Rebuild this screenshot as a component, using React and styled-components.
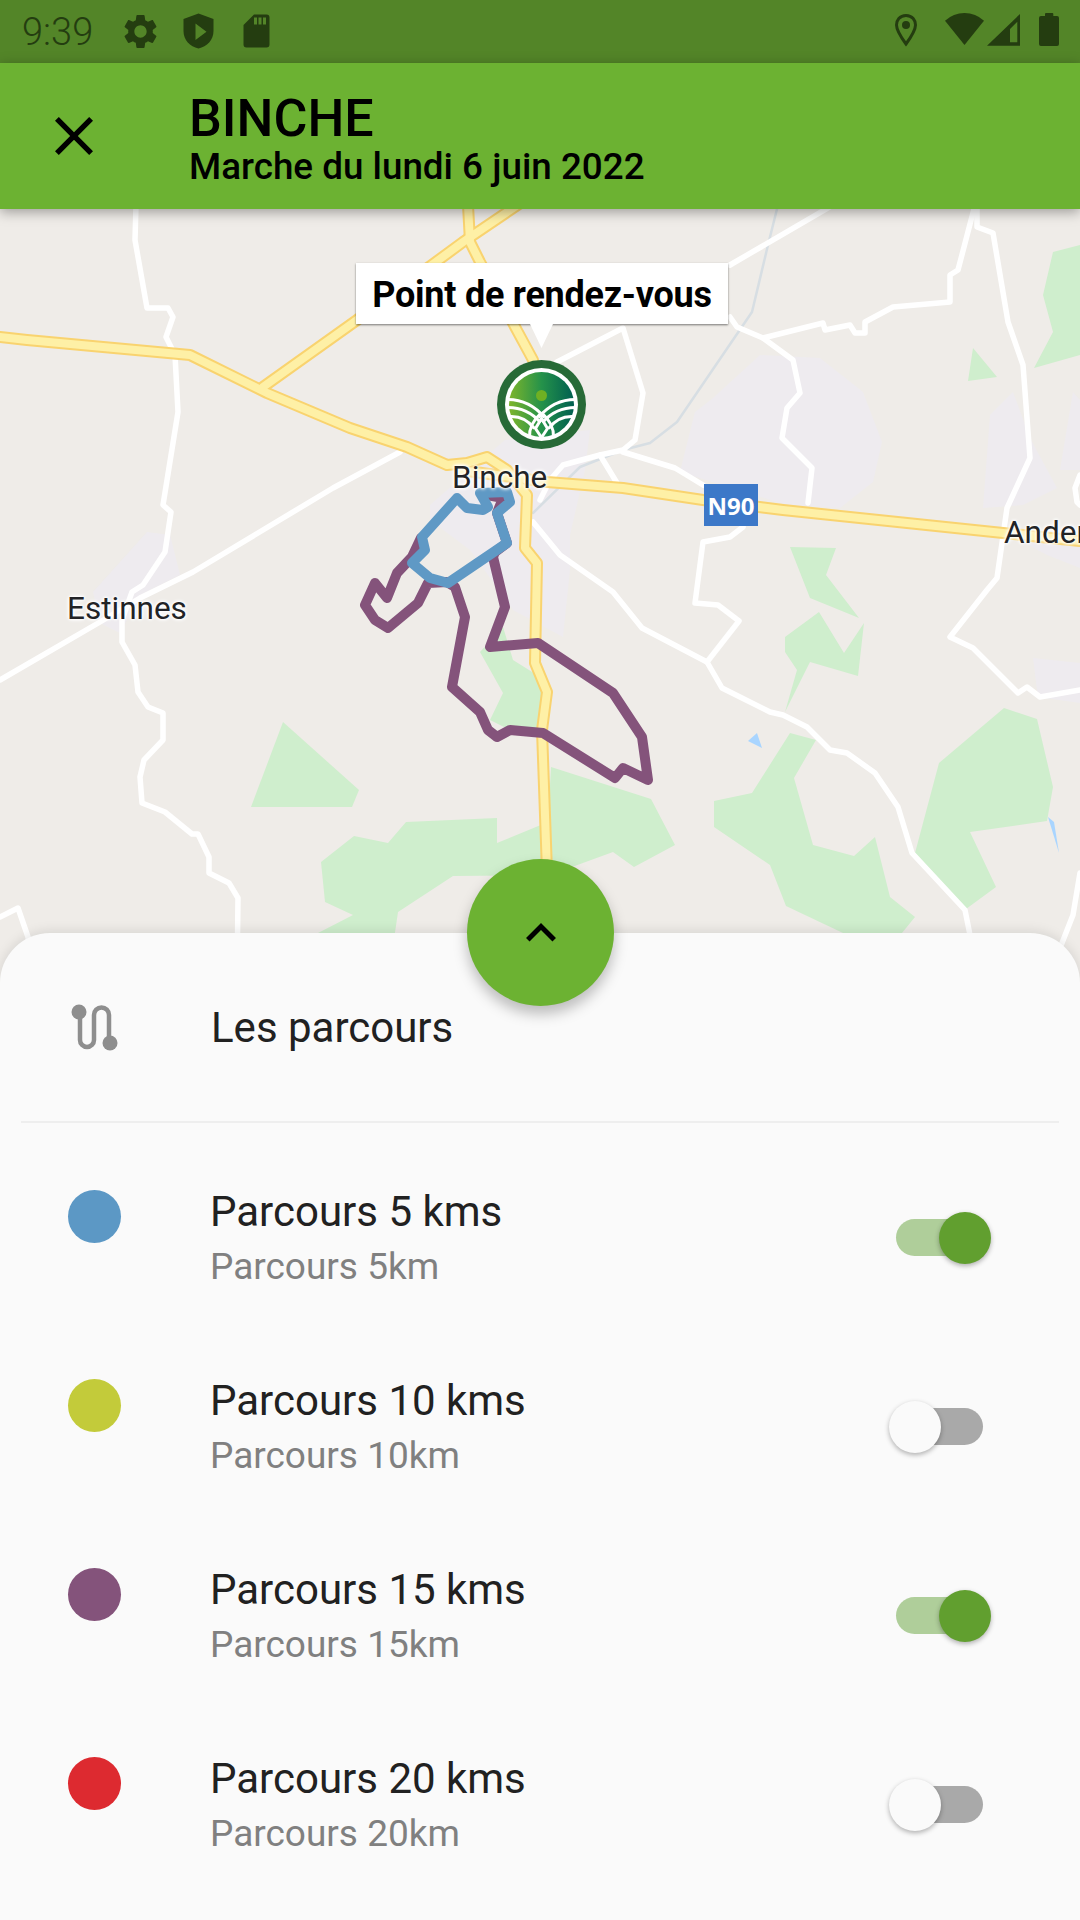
import React from 'react';
import styled, { createGlobalStyle } from 'styled-components';

const GlobalStyle = createGlobalStyle`
    html, body {
        margin: 0;
        padding: 0;
        background: #fafafa;
    }
    body {
        font-family: Roboto, "Liberation Sans", sans-serif;
    }
`;

//#region styled-elements
const Page = styled.div`
    display: flex;
    flex-direction: column;
    width: 1080px;
    height: 1920px;
    overflow: hidden;
`;

const StatusBar = styled.div`
    display: flex;
    align-items: center;
    justify-content: space-between;
    flex: none;
    height: 63px;
    padding: 0 15px 0 22px;
    box-sizing: border-box;
    background: #538528;
    color: #243d10;
`;

const StatusLeft = styled.div`
    display: flex;
    align-items: center;
    gap: 17px;
`;

const Clock = styled.span`
    font-size: 38px;
    font-weight: 300;
    margin-right: 10px;
`;

const AppBar = styled.div`
    position: relative;
    z-index: 2;
    display: flex;
    align-items: center;
    flex: none;
    gap: 96px;
    height: 146px;
    padding-left: 55px;
    box-sizing: border-box;
    background: #6cb232;
    box-shadow: 0 3px 12px rgba(0, 0, 0, 0.35);
`;

const TitleBlock = styled.div`
    display: flex;
    flex-direction: column;
    padding-top: 5px;
    color: #000;
`;

const Title = styled.div`
    font-size: 52px;
    font-weight: 500;
    line-height: 56px;
`;

const Subtitle = styled.div`
    font-size: 36.8px;
    font-weight: 500;
    line-height: 40px;
`;

const MapArea = styled.div`
    position: relative;
    flex: none;
    height: 774px;
    overflow: hidden;
    background: #efece8;
`;

const MapSvg = styled.svg`
    display: block;
    width: 1080px;
    height: 774px;
`;

const PlaceLabel = styled.span`
    position: absolute;
    left: ${p => p.$x}px;
    top: ${p => p.$y}px;
    font-size: 31.5px;
    line-height: 34px;
    color: #222326;
    text-shadow: 0 0 3px #fff, 0 0 3px #fff, 0 0 4px #fff, 0 0 5px #fff;
    white-space: nowrap;
`;

const RoadShield = styled.div`
    position: absolute;
    left: 704px;
    top: 275px;
    display: flex;
    align-items: center;
    justify-content: center;
    width: 54px;
    height: 42px;
    background: #3c78c8;
    color: #fff;
    font-family: "Noto Sans", Roboto, sans-serif;
    font-size: 24px;
    font-weight: 700;
`;

const Bubble = styled.div`
    position: absolute;
    left: 356px;
    top: 54px;
    display: flex;
    align-items: center;
    justify-content: center;
    width: 372px;
    height: 61px;
    padding-top: 2px;
    box-sizing: border-box;
    background: #fff;
    box-shadow: 0 1px 2px rgba(0, 0, 0, 0.5);
    color: #000;
    font-size: 36px;
    font-weight: 700;
    letter-spacing: -0.25px;
`;

const BubbleTail = styled.div`
    position: absolute;
    left: 174px;
    top: 61px;
    width: 23px;
    height: 24px;
    background: #fff;
    clip-path: polygon(0 0, 100% 0, 50% 100%);
`;

const Marker = styled.svg`
    position: absolute;
    left: 497px;
    top: 151px;
    width: 89px;
    height: 89px;
`;

const Sheet = styled.div`
    position: relative;
    z-index: 1;
    flex: 1;
    margin-top: -50px;
    background: #fafafa;
    border-radius: 50px 50px 0 0;
    box-shadow: 0 -2px 12px rgba(0, 0, 0, 0.1);
`;

const Fab = styled.div`
    position: absolute;
    left: 467px;
    top: -74px;
    display: flex;
    align-items: center;
    justify-content: center;
    width: 147px;
    height: 147px;
    border-radius: 50%;
    background: #6cb232;
    box-shadow: 0 8px 14px rgba(0, 0, 0, 0.25);
`;

const SheetHeader = styled.div`
    display: flex;
    align-items: center;
    gap: 93px;
    height: 188px;
    padding-left: 71px;
    font-size: 42px;
    color: #212121;
`;

const Divider = styled.div`
    height: 2px;
    margin: 0 21px;
    background: #eeeeee;
`;

const RouteList = styled.div`
    padding-top: 20px;
`;

const RouteRow = styled.div`
    display: flex;
    align-items: center;
    height: 189px;
    padding: 0 97px 0 68px;
`;

const RouteDot = styled.div`
    flex: none;
    align-self: flex-start;
    width: 53px;
    height: 53px;
    margin-top: 47px;
    border-radius: 50%;
    background: ${p => p.$color};
`;

const RouteText = styled.div`
    flex: 1;
    display: flex;
    flex-direction: column;
    margin-left: 89px;
`;

const RouteName = styled.div`
    font-size: 42px;
    line-height: 48px;
    color: #212121;
`;

const RouteDetail = styled.div`
    margin-top: 10px;
    font-size: 37px;
    line-height: 42px;
    color: #808080;
`;

const SwitchTrack = styled.div`
    position: relative;
    flex: none;
    width: 87px;
    height: 37px;
    border-radius: 19px;
    background: ${p => (p.$on ? '#afce9a' : '#a9a9a9')};
`;

const SwitchThumb = styled.div`
    position: absolute;
    top: -7.5px;
    left: ${p => (p.$on ? 43 : -7)}px;
    width: 52px;
    height: 52px;
    border-radius: 50%;
    background: ${p => (p.$on ? '#619f2f' : '#fafafa')};
    box-shadow: 0 2px 5px rgba(0, 0, 0, 0.3);
`;
//#endregion

const urban = [
    '430,505 470,470 505,440 590,430 585,470 570,535 570,570 563,637 513,610 470,550 430,520',
    '760,355 820,358 863,392 882,442 873,482 840,508 787,505 680,472 695,412 713,398',
    '1013,392 990,415 983,508 1023,505 1057,488 1030,438',
    '1073,392 1080,400 1080,470 1060,470',
    '1000,530 1047,555 1080,568 1080,530',
    '1033,658 1080,663 1080,703 1038,697',
    '147,532 170,535 180,575 140,595 120,633 100,623 93,592',
];

const forest = [
    '283,722 359,790 352,807 251,807',
    '354,836 388,843 406,822 497,818 497,843 548,822 551,767 651,799 675,845 634,867 613,852 550,875 453,876 398,912 391,960 300,960 318,933 353,915 325,902 321,862',
    '503,627 480,652 503,693 490,720 520,735 545,730 545,680 513,660',
    '819,612 785,637 785,652 797,670 785,712 810,662 858,676 864,623 844,653',
    '790,547 836,548 826,575 859,618 810,598',
    '790,733 816,740 794,778 813,845 854,856 875,837 890,897 915,917 880,960 843,933 786,906 770,865 714,827 714,801 752,793',
    '1004,708 1037,719 1053,787 1047,821 970,832 996,887 966,909 915,853 939,763',
    '973,348 997,377 968,381',
    '1053,252 1080,245 1080,355 1034,368 1053,332 1043,295',
];

const water = [
    '757,733 762,748 748,741',
    '1048,817 1054,822 1059,853',
];

const minorRoads = [
    '136,205 135,240 147,308 168,308 173,317 166,337 175,355 178,412 163,505 171,512 165,552 143,585 132,592 122,620 122,642 135,665 138,692 148,707 163,713 163,740 144,760 140,777 142,803 165,812 192,834 198,834 209,857 209,873 229,883 238,898 237,980',
    '400,452 333,488 193,572 140,598 100,622 0,680',
    '0,917 18,908 28,937 34,980',
    '730,265 833,205',
    '557,362 623,328 643,393 635,440 623,450 600,455 563,465 550,480 540,500',
    '600,455 617,483',
    '623,452 675,468 703,485',
    '730,317 737,327 763,338 793,360 800,393 787,408 782,438 812,468 808,503',
    '763,338 823,323 825,330 850,325 855,333 865,333 865,322 893,307 950,302 950,275 958,270 975,205',
    '977,205 977,227 993,233 1008,322 1023,365 1030,458 1007,508 997,578 987,590 950,637 973,648 1018,693 1027,687 1040,697 1080,690',
    '743,527 730,537 703,542 695,603 718,605 739,621 707,662',
    '533,522 560,555 613,592 642,628 707,662 722,688 770,712 783,715 807,727 830,750 847,753 875,773 898,807 912,853 965,910 975,960',
    '1080,873 1073,915 1062,943 1045,985',
    '1080,475 1075,488 1077,502 1080,505',
];

const majorRoads = [
    '0,337 27,340 190,355 267,393 350,428 407,447 447,465 467,463 487,457 507,470 527,495 525,548 537,563 535,663 547,692 542,730 548,900',
    '460,470 547,482 623,488 703,500 783,510 1003,533 1080,541',
    '263,387 357,320 463,242 525,200',
    '468,205 470,242 480,262 533,360',
];

const purpleRoute = '487,495 503,498 497,513 507,543 495,552 493,557 505,607 490,647 538,643 613,693 642,737 648,780 623,768 615,778 543,733 510,730 497,737 488,730 480,712 452,687 465,617 455,587 447,582 428,583 418,603 388,628 375,620 365,605 375,583 387,598 397,573 412,557 421,538';

const blueRoute = '457,498 422,537 425,550 412,563 430,578 448,583 507,543 497,513 510,502 507,492 480,493 488,507 483,510 467,508 457,498';

const routes = [
    { name: 'Parcours 5 kms', detail: 'Parcours 5km', color: '#5c98c5', on: true },
    { name: 'Parcours 10 kms', detail: 'Parcours 10km', color: '#c3cb3a', on: false },
    { name: 'Parcours 15 kms', detail: 'Parcours 15km', color: '#84537b', on: true },
    { name: 'Parcours 20 kms', detail: 'Parcours 20km', color: '#dd2a30', on: false },
];

const Line = ({ points, color, width }) => (
    <polyline points={points} fill="none" stroke={color} strokeWidth={width} strokeLinejoin="round" strokeLinecap="round" />
);

const LogoMarker = () => (
    <Marker viewBox="-44.5 -44.5 89 89">
        <defs>
            <linearGradient id="logoFill" x1="0" x2="1" y1="0" y2="0">
                <stop offset="0" stopColor="#7db52b" />
                <stop offset="0.5" stopColor="#25924a" />
                <stop offset="1" stopColor="#005f50" />
            </linearGradient>
        </defs>
        <circle r="44.5" fill="#276a37" />
        <circle r="36.5" fill="#fff" />
        <circle r="32.5" fill="url(#logoFill)" />
        <circle cy="-9" r="5.5" fill="#6fb023" />
        <g fill="none" stroke="#fff" strokeWidth="3">
            <path d="M-34 -5 Q-12 -5 3 13" />
            <path d="M-34 3 Q-14 3 -1 18" />
            <path d="M-32 12 Q-17 11 -7 24" />
            <path d="M34 -5 Q12 -5 -3 13" />
            <path d="M34 3 Q14 3 1 18" />
            <path d="M32 12 Q17 11 7 24" />
            <path d="M0 8 Q-13 20 -12 33" />
            <path d="M0 8 Q13 20 12 33" />
            <path d="M0 14 L-6 24 L0 33 L6 24 Z" />
        </g>
    </Marker>
);

const MapView = () => (
    <MapArea>
        <MapSvg viewBox="0 209 1080 774">
            {urban.map(p => <polygon key={p} points={p} fill="#eeebef" />)}
            {forest.map(p => <polygon key={p} points={p} fill="#cfeecd" />)}
            {water.map(p => <polygon key={p} points={p} fill="#a9d5ff" />)}
            <Line points="778,205 768,245 752,312 677,422 650,443 623,450 580,467 533,513" color="#d7dee3" width={2.5} />
            {minorRoads.map(p => <Line key={p} points={p} color="#fff" width={5.5} />)}
            {majorRoads.map(p => <Line key={p} points={p} color="#f9d36f" width={12} />)}
            {majorRoads.map(p => <Line key={p + 'i'} points={p} color="#fef0a6" width={8} />)}
            <Line points={purpleRoute} color="#84537b" width={10} />
            <Line points={blueRoute} color="#5f99c5" width={10} />
        </MapSvg>
        <PlaceLabel $x={452} $y={252}>Binche</PlaceLabel>
        <PlaceLabel $x={67} $y={383}>Estinnes</PlaceLabel>
        <PlaceLabel $x={1004} $y={307}>Andenne</PlaceLabel>
        <RoadShield>N90</RoadShield>
        <Bubble>
            Point de rendez-vous
            <BubbleTail />
        </Bubble>
        <LogoMarker />
    </MapArea>
);

const GearIcon = () => (
    <svg width="41" height="41" viewBox="0 0 24 24" fill="currentColor">
        <path d="M19.14,12.94c0.04-0.3,0.06-0.61,0.06-0.94c0-0.32-0.02-0.64-0.07-0.94l2.03-1.58c0.18-0.14,0.23-0.41,0.12-0.61l-1.92-3.32c-0.12-0.22-0.37-0.29-0.59-0.22l-2.39,0.96c-0.5-0.38-1.03-0.7-1.62-0.94L14.4,2.81c-0.04-0.24-0.24-0.41-0.48-0.41h-3.84c-0.24,0-0.43,0.17-0.47,0.41L9.25,5.35C8.66,5.59,8.12,5.92,7.63,6.29L5.24,5.33c-0.22-0.08-0.47,0-0.59,0.22L2.74,8.87C2.62,9.08,2.66,9.34,2.86,9.48l2.03,1.58C4.84,11.36,4.8,11.69,4.8,12s0.02,0.64,0.07,0.94l-2.03,1.58c-0.18,0.14-0.23,0.41-0.12,0.61l1.92,3.32c0.12,0.22,0.37,0.29,0.59,0.22l2.39-0.96c0.5,0.38,1.03,0.7,1.62,0.94l0.36,2.54c0.05,0.24,0.24,0.41,0.48,0.41h3.84c0.24,0,0.44-0.17,0.47-0.41l0.36-2.54c0.59-0.24,1.13-0.56,1.62-0.94l2.39,0.96c0.22,0.08,0.47,0,0.59-0.22l1.92-3.32c0.12-0.22,0.07-0.47-0.12-0.61L19.14,12.94z M12,15.6c-1.98,0-3.6-1.62-3.6-3.6s1.62-3.6,3.6-3.6s3.6,1.62,3.6,3.6S13.98,15.6,12,15.6z" />
    </svg>
);

const ShieldIcon = () => (
    <svg width="41" height="41" viewBox="0 0 41 41" fill="currentColor">
        <path fillRule="evenodd" d="M20.5 2.5 L35.5 8 V20 C35.5 29 29 35.5 20.5 37.5 C12 35.5 5.5 29 5.5 20 V8 Z M17.5 12.5 V29 L28.5 20.7 Z" />
    </svg>
);

const SdIcon = () => (
    <svg width="41" height="41" viewBox="0 0 41 41" fill="currentColor">
        <path fillRule="evenodd" d="M18 3.5 H30.5 a3 3 0 0 1 3 3 V33.5 a3 3 0 0 1 -3 3 H10.5 a3 3 0 0 1 -3 -3 V14 Z M18 6.5 V13.5 H21 V6.5 Z M22.5 6.5 V13.5 H25.5 V6.5 Z M27 6.5 V13.5 H30 V6.5 Z" />
    </svg>
);

const SystemIcons = () => (
    <svg width="180" height="41" viewBox="0 0 180 41" fill="currentColor">
        <path d="M21 4.5 C14.5 4.5 11.5 9.5 11.5 14 C11.5 20 21 33 21 33 C21 33 30.5 20 30.5 14 C30.5 9.5 27.5 4.5 21 4.5Z" fill="none" stroke="currentColor" strokeWidth="3" />
        <circle cx="21" cy="14" r="4" />
        <path d="M60 9.7 A28.5 28.5 0 0 1 99 9.7 L79.5 34 Z" />
        <path fillRule="evenodd" d="M102 34.7 L135 3 V34.7 Z M125 18 V31.3 H132.3 V10.7 Z" />
        <path d="M160 5 V3 a1 1 0 0 1 1 -1 H167.3 a1 1 0 0 1 1 1 V5 H172 a2 2 0 0 1 2 2 V33 a2 2 0 0 1 -2 2 H156 a2 2 0 0 1 -2 -2 V7 a2 2 0 0 1 2 -2 Z" />
    </svg>
);

const CloseIcon = () => (
    <svg width="38" height="38" viewBox="5 5 14 14" fill="#000">
        <path d="M19 6.41L17.59 5 12 10.59 6.41 5 5 6.41 10.59 12 5 17.59 6.41 19 12 13.41 17.59 19 19 17.59 13.41 12z" />
    </svg>
);

const ChevronUp = () => (
    <svg width="30" height="18.5" viewBox="6 8 12 7.41" fill="#000">
        <path d="M12 8l-6 6 1.41 1.41L12 10.83l4.59 4.58L18 14z" />
    </svg>
);

const RoutesIcon = () => (
    <svg width="47" height="47" viewBox="0 0 47 47" fill="none" stroke="#8e8e8e" strokeWidth="4.5">
        <path d="M9 8 V36 a7 7 0 0 0 14 0 V11 a7.5 7.5 0 0 1 15 0 V39" />
        <circle cx="8" cy="8" r="7.5" fill="#8e8e8e" stroke="none" />
        <circle cx="39" cy="39" r="7.5" fill="#8e8e8e" stroke="none" />
    </svg>
);

const App = () => (
    <Page>
        <GlobalStyle />
        <StatusBar>
            <StatusLeft>
                <Clock>9:39</Clock>
                <GearIcon />
                <ShieldIcon />
                <SdIcon />
            </StatusLeft>
            <SystemIcons />
        </StatusBar>
        <AppBar>
            <CloseIcon />
            <TitleBlock>
                <Title>BINCHE</Title>
                <Subtitle>Marche du lundi 6 juin 2022</Subtitle>
            </TitleBlock>
        </AppBar>
        <MapView />
        <Sheet>
            <Fab>
                <ChevronUp />
            </Fab>
            <SheetHeader>
                <RoutesIcon />
                Les parcours
            </SheetHeader>
            <Divider />
            <RouteList>
                {routes.map(route => (
                    <RouteRow key={route.name}>
                        <RouteDot $color={route.color} />
                        <RouteText>
                            <RouteName>{route.name}</RouteName>
                            <RouteDetail>{route.detail}</RouteDetail>
                        </RouteText>
                        <SwitchTrack $on={route.on}>
                            <SwitchThumb $on={route.on} />
                        </SwitchTrack>
                    </RouteRow>
                ))}
            </RouteList>
        </Sheet>
    </Page>
);

export default App;
